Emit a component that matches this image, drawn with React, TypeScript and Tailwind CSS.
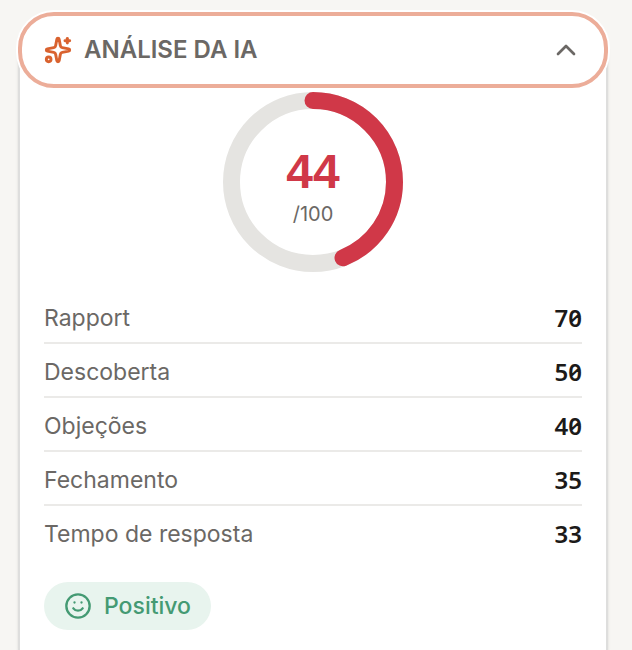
// components/analysis/AiAnalysisCard.tsx
import { useState } from 'react';
import { ChevronUp, Smile, Sparkles } from 'lucide-react';

interface ScoreRow {
  label: string;
  value: number;
}

const scores: ScoreRow[] = [
  { label: 'Rapport', value: 70 },
  { label: 'Descoberta', value: 50 },
  { label: 'Objeções', value: 40 },
  { label: 'Fechamento', value: 35 },
  { label: 'Tempo de resposta', value: 33 },
];

function ScoreRing({ score }: { score: number }) {
  return (
    <div className="relative mx-auto size-[180px]">
      <svg viewBox="0 0 180 180" className="size-full -rotate-90" fill="none" aria-hidden="true">
        <circle cx="90" cy="90" r="81.5" stroke="#e5e4e1" strokeWidth="17" />
        <circle
          cx="90"
          cy="90"
          r="81.5"
          stroke="#d03848"
          strokeWidth="17"
          strokeLinecap="round"
          pathLength="100"
          strokeDasharray={`${score} 100`}
        />
      </svg>
      <div className="absolute inset-0 flex flex-col items-center justify-center pt-4">
        <span className="font-['Liberation_Sans',sans-serif] text-5xl leading-12 font-bold text-[#d03848]">
          {score}
        </span>
        <span className="text-xl leading-9 text-[#6b6865]">/100</span>
      </div>
    </div>
  );
}

function ScoreTable({ rows }: { rows: ScoreRow[] }) {
  return (
    <table className="mt-[18px] w-full border-collapse text-[23px] leading-8">
      <tbody>
        {rows.map((row) => (
          <tr key={row.label} className="border-b-2 border-[#ebeae8] last:border-b-0">
            <th scope="row" className="pt-3 pb-2 text-left font-normal text-[#6b6865]">
              {row.label}
            </th>
            <td className="pt-3 pb-2 text-right font-['Noto_Sans',sans-serif] text-2xl leading-8 font-semibold text-[#1c1a19] tabular-nums slashed-zero">
              {row.value}
            </td>
          </tr>
        ))}
      </tbody>
    </table>
  );
}

export default function App() {
  const [open, setOpen] = useState(true);

  return (
    <main className="flex min-h-screen flex-col bg-[#f7f6f3] pt-3 pr-6 pl-[18px] font-['Inter',sans-serif]">
      <section className="flex-1 rounded-t-[36px] border-x-2 border-[#dededd] bg-white shadow-sm">
        <h2 className="-mx-0.5">
          <button
            type="button"
            aria-expanded={open}
            onClick={() => setOpen(!open)}
            className="flex h-[76px] w-full items-center gap-3 rounded-[36px] border-4 border-[#ecad99] bg-white px-[22px] text-[#6b6865] ring-2 ring-white"
          >
            <Sparkles size={28} strokeWidth={2.5} className="text-[#d9622f]" />
            <span className="text-2xl font-semibold">ANÁLISE DA IA</span>
            <ChevronUp size={32} className={open ? 'ml-auto' : 'ml-auto rotate-180'} />
          </button>
        </h2>
        {open && (
          <div className="px-6 pt-1 pb-5">
            <ScoreRing score={44} />
            <ScoreTable rows={scores} />
            <span className="mt-6 inline-flex h-12 items-center gap-3 rounded-full bg-[#e8f4ee] px-5 text-[23px] font-medium text-[#449a73]">
              <Smile size={28} />
              Positivo
            </span>
          </div>
        )}
      </section>
    </main>
  );
}
